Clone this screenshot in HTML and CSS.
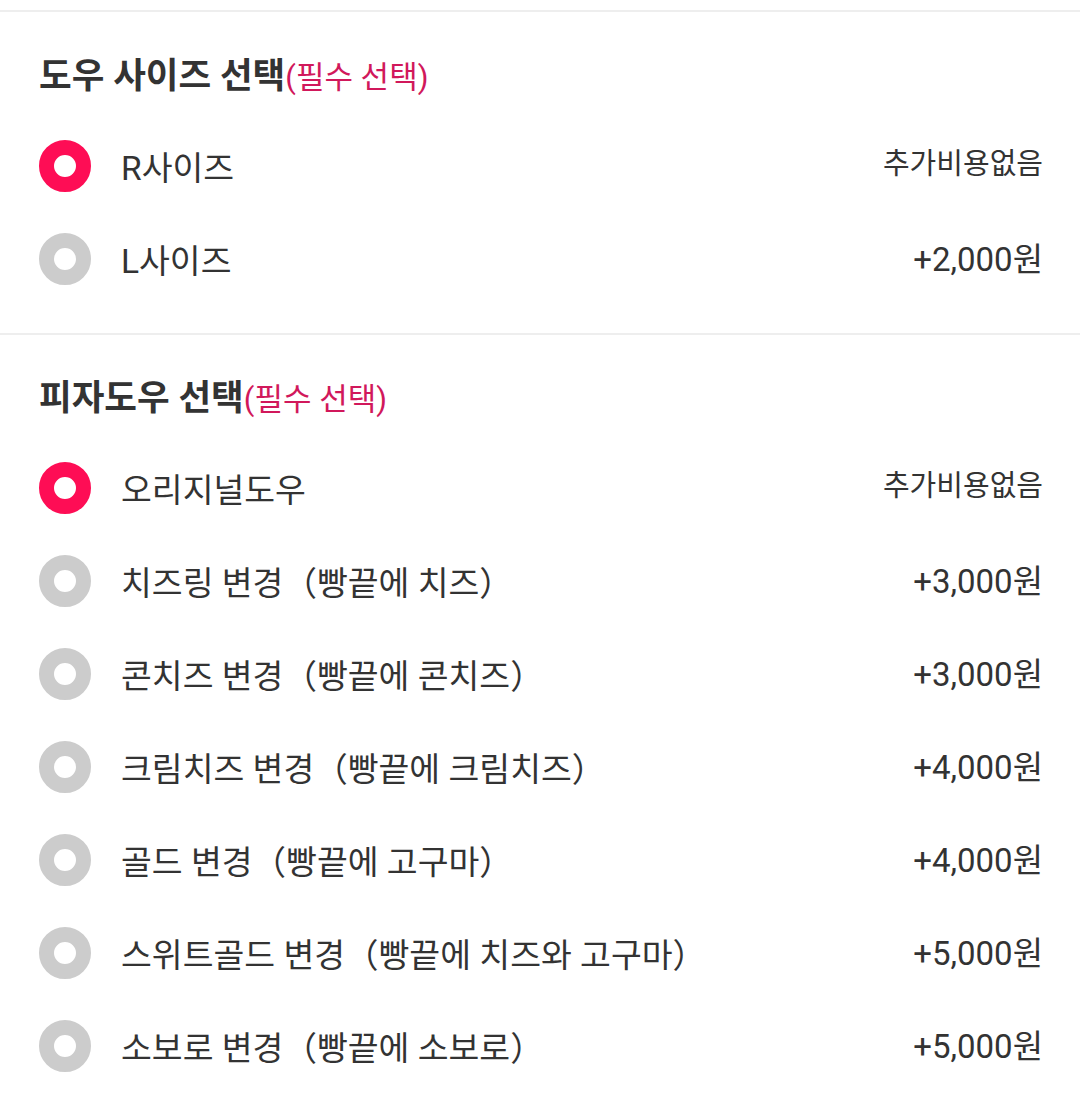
FILE: index.html
```html
<!DOCTYPE html>
<html lang="ko">
<head>
<meta charset="utf-8">
<link rel="stylesheet" href="styles.css">
</head>
<body>
<div class="page">
  <div class="divider"></div>
  <section class="section">
    <h2 class="heading">도우 사이즈 선택<span class="req">(필수 선택)</span></h2>
    <ul class="options">
      <li class="option"><span class="radio on"></span><span class="label">R사이즈</span><span class="price free">추가비용없음</span></li>
      <li class="option"><span class="radio"></span><span class="label">L사이즈</span><span class="price">+2,000원</span></li>
    </ul>
  </section>
  <div class="divider"></div>
  <section class="section">
    <h2 class="heading">피자도우 선택<span class="req">(필수 선택)</span></h2>
    <ul class="options">
      <li class="option"><span class="radio on"></span><span class="label">오리지널도우</span><span class="price free">추가비용없음</span></li>
      <li class="option"><span class="radio"></span><span class="label">치즈링 변경（빵끝에 치즈）</span><span class="price">+3,000원</span></li>
      <li class="option"><span class="radio"></span><span class="label">콘치즈 변경（빵끝에 콘치즈）</span><span class="price">+3,000원</span></li>
      <li class="option"><span class="radio"></span><span class="label">크림치즈 변경（빵끝에 크림치즈）</span><span class="price">+4,000원</span></li>
      <li class="option"><span class="radio"></span><span class="label">골드 변경（빵끝에 고구마）</span><span class="price">+4,000원</span></li>
      <li class="option"><span class="radio"></span><span class="label">스위트골드 변경（빵끝에 치즈와 고구마）</span><span class="price">+5,000원</span></li>
      <li class="option"><span class="radio"></span><span class="label">소보로 변경（빵끝에 소보로）</span><span class="price">+5,000원</span></li>
    </ul>
  </section>
</div>
</body>
</html>
```

FILE: styles.css
```css
html, body {
  margin: 0;
  padding: 0;
  background: #ffffff;
}
body {
  font-family: Roboto, "Noto Sans CJK KR", sans-serif;
  color: #333333;
}
.page {
  padding-top: 10px;
}
.divider {
  height: 2px;
  background: #eeeeee;
}
.section {
  padding: 42px 37px 28px 39px;
}
.section + .divider + .section {
  padding-top: 41px;
}
.heading {
  margin: 0 0 21px 0;
  height: 44px;
  line-height: 44px;
  font-size: 35.5px;
  font-weight: 700;
  color: #333333;
  white-space: nowrap;
}
.req {
  font-size: 31px;
  font-weight: 400;
  color: #d1185b;
}
.options {
  list-style: none;
  margin: 0;
  padding: 0;
}
.option {
  display: flex;
  align-items: center;
  height: 93px;
}
.radio {
  box-sizing: border-box;
  width: 52px;
  height: 52px;
  border-radius: 50%;
  border: 15px solid #cccccc;
  background: #ffffff;
  flex: none;
  margin-right: 30px;
}
.radio.on {
  border-color: #fe0d55;
}
.label {
  flex: 1;
  font-size: 33.5px;
  white-space: nowrap;
  color: #333333;
}
.price {
  font-size: 33px;
  white-space: nowrap;
  color: #333333;
  padding-bottom: 4px;
}
.price.free {
  font-size: 29px;
  padding-bottom: 9px;
}
```
